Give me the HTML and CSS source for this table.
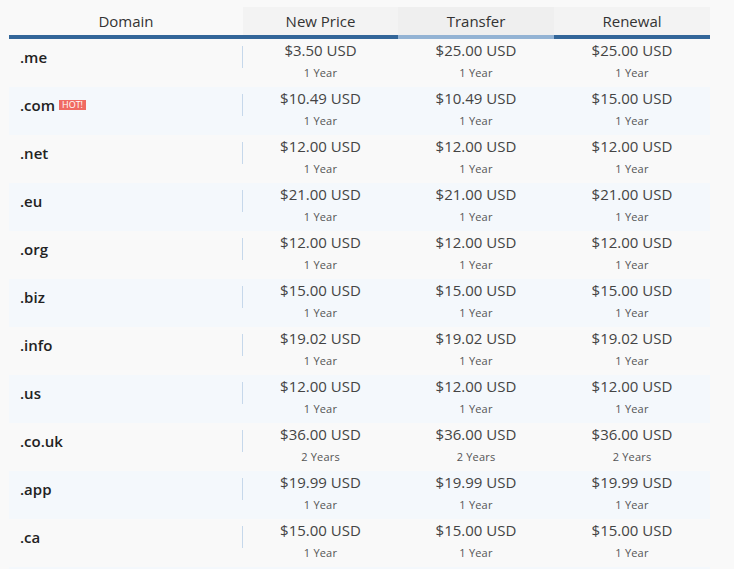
FILE: index.html
```html
<!DOCTYPE html>
<html>
<head>
<meta charset="utf-8">
<link rel="stylesheet" href="styles.css">
</head>
<body>
<div class="table">
  <div class="head">
    <div class="th th-domain">Domain</div>
    <div class="th th-shaded">New Price</div>
    <div class="th th-active">Transfer</div>
    <div class="th th-shaded">Renewal</div>
  </div>
  <div class="row">
    <div class="domain"><span class="name">.me</span><span class="sep"></span></div>
    <div class="price"><div class="amt">$3.50 USD</div><div class="term">1 Year</div></div>
    <div class="price"><div class="amt">$25.00 USD</div><div class="term">1 Year</div></div>
    <div class="price"><div class="amt">$25.00 USD</div><div class="term">1 Year</div></div>
  </div>
  <div class="row alt">
    <div class="domain"><span class="name">.com <span class="hot">HOT!</span></span><span class="sep"></span></div>
    <div class="price"><div class="amt">$10.49 USD</div><div class="term">1 Year</div></div>
    <div class="price"><div class="amt">$10.49 USD</div><div class="term">1 Year</div></div>
    <div class="price"><div class="amt">$15.00 USD</div><div class="term">1 Year</div></div>
  </div>
  <div class="row">
    <div class="domain"><span class="name">.net</span><span class="sep"></span></div>
    <div class="price"><div class="amt">$12.00 USD</div><div class="term">1 Year</div></div>
    <div class="price"><div class="amt">$12.00 USD</div><div class="term">1 Year</div></div>
    <div class="price"><div class="amt">$12.00 USD</div><div class="term">1 Year</div></div>
  </div>
  <div class="row alt">
    <div class="domain"><span class="name">.eu</span><span class="sep"></span></div>
    <div class="price"><div class="amt">$21.00 USD</div><div class="term">1 Year</div></div>
    <div class="price"><div class="amt">$21.00 USD</div><div class="term">1 Year</div></div>
    <div class="price"><div class="amt">$21.00 USD</div><div class="term">1 Year</div></div>
  </div>
  <div class="row">
    <div class="domain"><span class="name">.org</span><span class="sep"></span></div>
    <div class="price"><div class="amt">$12.00 USD</div><div class="term">1 Year</div></div>
    <div class="price"><div class="amt">$12.00 USD</div><div class="term">1 Year</div></div>
    <div class="price"><div class="amt">$12.00 USD</div><div class="term">1 Year</div></div>
  </div>
  <div class="row alt">
    <div class="domain"><span class="name">.biz</span><span class="sep"></span></div>
    <div class="price"><div class="amt">$15.00 USD</div><div class="term">1 Year</div></div>
    <div class="price"><div class="amt">$15.00 USD</div><div class="term">1 Year</div></div>
    <div class="price"><div class="amt">$15.00 USD</div><div class="term">1 Year</div></div>
  </div>
  <div class="row">
    <div class="domain"><span class="name">.info</span><span class="sep"></span></div>
    <div class="price"><div class="amt">$19.02 USD</div><div class="term">1 Year</div></div>
    <div class="price"><div class="amt">$19.02 USD</div><div class="term">1 Year</div></div>
    <div class="price"><div class="amt">$19.02 USD</div><div class="term">1 Year</div></div>
  </div>
  <div class="row alt">
    <div class="domain"><span class="name">.us</span><span class="sep"></span></div>
    <div class="price"><div class="amt">$12.00 USD</div><div class="term">1 Year</div></div>
    <div class="price"><div class="amt">$12.00 USD</div><div class="term">1 Year</div></div>
    <div class="price"><div class="amt">$12.00 USD</div><div class="term">1 Year</div></div>
  </div>
  <div class="row">
    <div class="domain"><span class="name">.co.uk</span><span class="sep"></span></div>
    <div class="price"><div class="amt">$36.00 USD</div><div class="term">2 Years</div></div>
    <div class="price"><div class="amt">$36.00 USD</div><div class="term">2 Years</div></div>
    <div class="price"><div class="amt">$36.00 USD</div><div class="term">2 Years</div></div>
  </div>
  <div class="row alt">
    <div class="domain"><span class="name">.app</span><span class="sep"></span></div>
    <div class="price"><div class="amt">$19.99 USD</div><div class="term">1 Year</div></div>
    <div class="price"><div class="amt">$19.99 USD</div><div class="term">1 Year</div></div>
    <div class="price"><div class="amt">$19.99 USD</div><div class="term">1 Year</div></div>
  </div>
  <div class="row">
    <div class="domain"><span class="name">.ca</span><span class="sep"></span></div>
    <div class="price"><div class="amt">$15.00 USD</div><div class="term">1 Year</div></div>
    <div class="price"><div class="amt">$15.00 USD</div><div class="term">1 Year</div></div>
    <div class="price"><div class="amt">$15.00 USD</div><div class="term">1 Year</div></div>
  </div>
  <div class="row alt"></div>
</div>
</body>
</html>
```
FILE: styles.css
```css
html, body {
  margin: 0;
  padding: 0;
  background: #f9f9f9;
}
body {
  font-family: "Open Sans", "Liberation Sans", sans-serif;
  color: #333;
}
.table {
  width: 701px;
  margin-left: 9px;
  padding-top: 7px;
}
.head, .row {
  display: grid;
  grid-template-columns: 234px 155px 156px 156px;
}
.th {
  height: 28px;
  line-height: 28px;
  text-align: center;
  font-size: 15px;
  color: #333;
  border-bottom: 4px solid #336699;
}
.th-shaded {
  background: #f3f3f3;
}
.th-active {
  background: #efefef;
  border-bottom-color: #93b3d4;
}
.row {
  height: 48px;
}
.row.alt {
  background: #f4f8fc;
}
.domain {
  display: flex;
  align-items: center;
  height: 35px;
  padding-left: 11px;
}
.name {
  flex: 1;
  font-size: 15px;
  font-weight: 600;
  color: #222;
  display: flex;
  align-items: center;
  gap: 4px;
}
.hot {
  background: #f06a62;
  color: #fff;
  font-size: 9px;
  font-weight: 400;
  line-height: 10px;
  padding: 0 3px;
}
.sep {
  width: 1px;
  height: 22px;
  background: #c6d8eb;
}
.price {
  text-align: center;
  padding-top: 1px;
}
.amt {
  font-size: 15px;
  line-height: 21px;
  color: #444;
}
.term {
  font-size: 11px;
  line-height: 23px;
  color: #555;
  letter-spacing: 0.2px;
}
```
